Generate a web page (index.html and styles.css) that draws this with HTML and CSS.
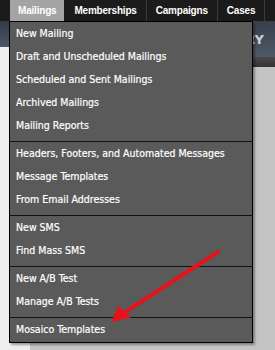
FILE: index.html
```html
<!DOCTYPE html>
<html lang="en">
  <head>
    <meta charset="utf-8" />
    <title>Mailings menu</title>
    <link rel="stylesheet" href="styles.css">
  </head>

  <body>
    <div class="topbar">
      <ul class="nav">
        <li class="nav-item active">Mailings</li>
        <li class="nav-item">Memberships</li>
        <li class="nav-item">Campaigns</li>
        <li class="nav-item">Cases</li>
      </ul>
    </div>

    <div class="page">
      <div class="sidebar">
        <div class="sidebar-head"></div>
      </div>
      <div class="main">
        <div class="main-head">
          <span class="main-title">SUMMARY</span>
        </div>
        <div class="main-strip"></div>
      </div>
    </div>

    <div class="dropdown">
      <ul class="menu-group">
        <li>New Mailing</li>
        <li>Draft and Unscheduled Mailings</li>
        <li>Scheduled and Sent Mailings</li>
        <li>Archived Mailings</li>
        <li>Mailing Reports</li>
      </ul>
      <ul class="menu-group">
        <li>Headers, Footers, and Automated Messages</li>
        <li>Message Templates</li>
        <li>From Email Addresses</li>
      </ul>
      <ul class="menu-group">
        <li>New SMS</li>
        <li>Find Mass SMS</li>
      </ul>
      <ul class="menu-group">
        <li>New A/B Test</li>
        <li>Manage A/B Tests</li>
      </ul>
      <ul class="menu-group">
        <li>Mosaico Templates</li>
      </ul>
    </div>

    <svg class="pointer" width="275" height="350" viewBox="0 0 275 350">
      <line x1="218" y1="252" x2="122" y2="314" stroke="#e5131b" stroke-width="4" stroke-linecap="round" />
      <polygon points="111.5,322 118,305.5 131,317.5" fill="#e5131b" />
    </svg>
  </body>
</html>
```

FILE: styles.css
```css
html {
  font-family: "DejaVu Sans Condensed", "DejaVu Sans", sans-serif;
  font-size: 10.5px;
}

body {
  margin: 0;
  background-color: #c4c4c4;
  position: relative;
  height: 350px;
  overflow: hidden;
}

ul {
  list-style: none;
  margin: 0;
  padding: 0;
}

/* top navigation */
.topbar {
  height: 21px;
  padding-left: 10px;
  background-color: #1b1b1b;
  overflow: hidden;
}

.nav {
  display: flex;
  height: 100%;
}

.nav-item {
  display: flex;
  align-items: center;
  padding: 0 9px;
  border-right: 1px solid #3b3b3b;
  color: #fff;
  font-family: "Liberation Sans", Arial, sans-serif;
  font-size: 10px;
  font-weight: bold;
  letter-spacing: -0.2px;
  white-space: nowrap;
}

.nav-item.active {
  padding: 0 8px;
  background-color: #a4a4a4;
  border-right-color: #1b1b1b;
}

/* page behind the menu */
.page {
  display: flex;
  height: 329px;
}

.sidebar {
  width: 30px;
  background-color: #efefef;
}

.sidebar-head {
  height: 26px;
  background-image: linear-gradient(to bottom, #323a44, #4b5866);
}

.main {
  flex: 1;
  background-color: #c4c4c4;
}

.main-head {
  display: flex;
  justify-content: flex-end;
  align-items: center;
  height: 36px;
  padding-right: 11px;
  background-image: linear-gradient(to bottom, #36404b, #4d5a68);
}

.main-title {
  color: #c9d0d8;
  font-family: "DejaVu Sans", sans-serif;
  font-size: 13px;
  font-weight: bold;
}

.main-strip {
  height: 10px;
  background-image: linear-gradient(to bottom, #4a4a4a, #333);
}

/* dropdown menu */
.dropdown {
  position: absolute;
  top: 21px;
  left: 9px;
  width: 244px;
  box-sizing: border-box;
  border: 1px solid #000;
  background-color: #5a5a5a;
  box-shadow: 2px 2px 2px rgba(0, 0, 0, 0.35);
}

.menu-group {
  padding-bottom: 4px;
  border-bottom: 1px solid #111;
}

.menu-group:last-child {
  padding-bottom: 1px;
  border-bottom: none;
}

.menu-group li {
  height: 23px;
  line-height: 23px;
  padding-left: 6px;
  color: #fff;
  -webkit-text-stroke: 0.2px #fff;
  white-space: nowrap;
}

.pointer {
  position: absolute;
  top: 0;
  left: 0;
}
```
